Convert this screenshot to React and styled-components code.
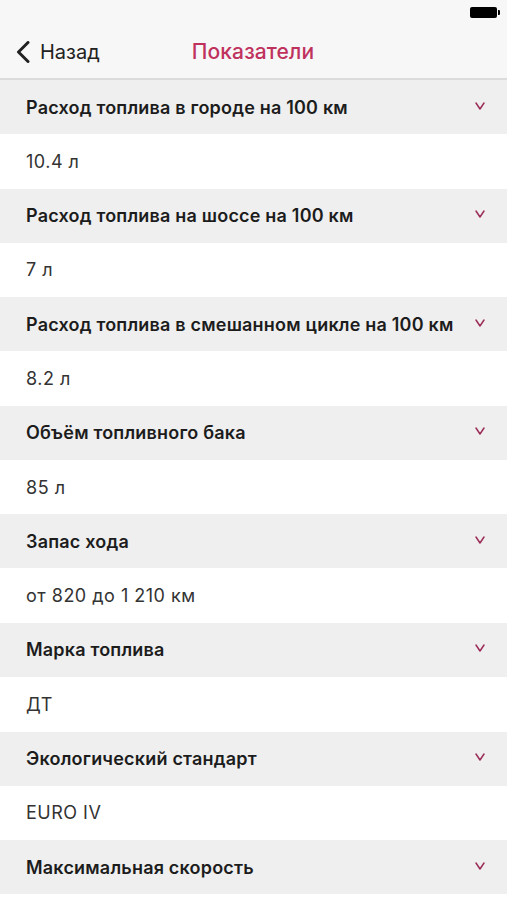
import styled, { createGlobalStyle } from 'styled-components'

const Global = createGlobalStyle`
  html, body {
    margin: 0;
    padding: 0;
    background: #ffffff;
  }
  body {
    font-family: Inter, 'Noto Sans', sans-serif;
    -webkit-font-smoothing: antialiased;
  }
`

const Screen = styled.div`
  width: 507px;
  height: 900px;
  overflow: hidden;
  display: flex;
  flex-direction: column;
  background: #ffffff;
`

const Top = styled.div`
  background: #f7f7f7;
  border-bottom: 2px solid #dcdcdc;
`

const StatusBar = styled.div`
  height: 25px;
  display: flex;
  justify-content: flex-end;
  align-items: flex-start;
  padding: 7px 7px 0 0;
  box-sizing: border-box;
`

const Battery = styled.div`
  position: relative;
  width: 27px;
  height: 11px;
  background: #000;
  border-radius: 2px;
  margin-right: 3px;
  &::after {
    content: '';
    position: absolute;
    right: -3px;
    top: 3px;
    width: 2px;
    height: 5px;
    background: #000;
    border-radius: 0 1px 1px 0;
  }
`

const NavBar = styled.div`
  height: 53px;
  display: grid;
  grid-template-columns: 1fr auto 1fr;
  align-items: center;
  padding: 0 0 0 15px;
`

const Back = styled.div`
  display: flex;
  align-items: center;
  gap: 8px;
  color: #222;
  font-size: 20px;
  letter-spacing: 0;
`

const Title = styled.div`
  color: #c0325e;
  font-size: 21px;
  font-weight: 500;
  letter-spacing: 0.1px;
  margin-left: -16px;
`

const Row = styled.div`
  height: ${(p) => p.$h}px;
  flex: none;
  display: flex;
  align-items: center;
  justify-content: space-between;
  padding: 0 22px 0 26px;
  box-sizing: border-box;
  background: ${(p) => (p.$head ? '#efefef' : '#ffffff')};
  color: ${(p) => (p.$head ? '#1c1c1c' : '#333333')};
  font-size: 18px;
  font-weight: ${(p) => (p.$head ? 600 : 400)};
  letter-spacing: ${(p) => (p.$head ? '0.2px' : '0.5px')};
`

const Caret = styled.svg`
  width: 10px;
  height: 8px;
  margin-bottom: 3px;
  flex: none;
`

const Chevron = () => (
  <Caret viewBox="0 0 10 8">
    <path d="M1 1 L5 7 L9 1" fill="none" stroke="#9c2d58" strokeWidth="1.5" strokeLinecap="round" strokeLinejoin="round" />
  </Caret>
)

const items = [
  ['Расход топлива в городе на 100 км', '10.4 л'],
  ['Расход топлива на шоссе на 100 км', '7 л'],
  ['Расход топлива в смешанном цикле на 100 км', '8.2 л'],
  ['Объём топливного бака', '85 л'],
  ['Запас хода', 'от 820 до 1 210 км'],
  ['Марка топлива', 'ДТ'],
  ['Экологический стандарт', 'EURO IV'],
  ['Максимальная скорость', ''],
]

export default function App() {
  return (
    <>
      <Global />
      <Screen>
        <Top>
          <StatusBar>
            <Battery />
          </StatusBar>
          <NavBar>
            <Back>
              <svg width="17" height="22" viewBox="0 0 17 22">
                <path d="M13 1.5 L3.5 11 L13 20.5" fill="none" stroke="#222" strokeWidth="3" strokeLinecap="round" strokeLinejoin="round" />
              </svg>
              Назад
            </Back>
            <Title>Показатели</Title>
            <div />
          </NavBar>
        </Top>
        {items.map(([head, value]) => (
          <div key={head}>
            <Row $head $h={54}>
              {head}
              <Chevron />
            </Row>
            {value && <Row $h={54.6}>{value}</Row>}
          </div>
        ))}
      </Screen>
    </>
  )
}
